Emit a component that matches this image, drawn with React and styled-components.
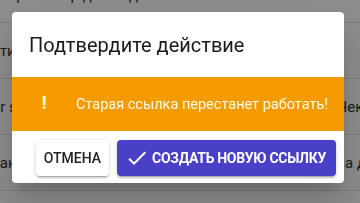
import React from "react";
import styled, { createGlobalStyle } from "styled-components";

const GlobalStyle = createGlobalStyle`
    html, body {
        margin: 0;
        padding: 0;
        width: 360px;
        height: 203px;
        overflow: hidden;
        background: #ffffff;
        font-family: Roboto, "Noto Sans", sans-serif;
    }
`;

// rows of the page behind the dialog, only edges of them stay visible
const rows = [
    { left: "Термометр для воды и воздуха BSV Bosch - бессонница, россия", leftShift: 0, right: "", rightPad: 0 },
    { left: "Активные ссылки", leftShift: -18, right: "", rightPad: 0 },
    { left: "Partner shop", leftShift: -44, right: "Чек на оплату", rightPad: 157 },
    { left: "Сканер штрих-кода", leftShift: -18, right: "Сумма для оплаты", rightPad: 126 },
];

const Page = styled.main`
    margin-top: -33px;
`;

const Row = styled.div`
    display: grid;
    grid-template-columns: 180px 180px;
    height: 55px;
    align-items: center;
    border-bottom: 1px solid #e0e0e0;
    font-size: 15px;
    color: #333;
    white-space: nowrap;
    overflow: hidden;
`;

const Cell = styled.div`
    overflow: hidden;
    padding-left: ${(p) => p.$pad || 0}px;
    text-indent: ${(p) => p.$shift || 0}px;
`;

const Overlay = styled.div`
    position: fixed;
    inset: 0;
    background: rgba(0, 0, 0, 0.45);
    display: flex;
    align-items: flex-start;
    padding: 12px 16px 0 12px;
`;

const Dialog = styled.section`
    width: 332px;
    background: #fff;
    border-radius: 4px;
    overflow: hidden;
    box-shadow: 0 11px 15px -7px rgba(0, 0, 0, 0.2), 0 24px 38px 3px rgba(0, 0, 0, 0.14);
`;

const Title = styled.h2`
    margin: 0;
    height: 65px;
    display: flex;
    align-items: center;
    padding: 0 17px;
    font-size: 20px;
    font-weight: 400;
    color: #1a1a1a;
`;

const Warning = styled.div`
    height: 54px;
    background: #f59b00;
    display: flex;
    align-items: center;
    color: #fffbe6;
    font-size: 14.5px;
`;

const Mark = styled.span`
    width: 64px;
    text-align: center;
    font-size: 19px;
    font-weight: 700;
    margin-top: -3px;
`;

const Actions = styled.div`
    height: 52px;
    display: flex;
    justify-content: flex-end;
    align-items: flex-start;
    gap: 8px;
    padding: 9px 8px 0 0;
    box-sizing: border-box;
`;

const Button = styled.button`
    height: 36px;
    border: none;
    border-radius: 4px;
    padding: ${(p) => (p.$primary ? "0 10px 0 8px" : "0 8px")};
    display: flex;
    align-items: center;
    gap: 3px;
    font-family: Roboto, sans-serif;
    font-size: 14px;
    font-weight: ${(p) => (p.$primary ? 700 : 500)};
    letter-spacing: ${(p) => (p.$primary ? "-0.3px" : "0")};
    background: ${(p) => (p.$primary ? "#4a40c8" : "#ffffff")};
    color: ${(p) => (p.$primary ? "#ffffff" : "#1f1f1f")};
    box-shadow: 0 3px 1px -2px rgba(0, 0, 0, 0.2), 0 2px 2px 0 rgba(0, 0, 0, 0.14),
        0 1px 5px 0 rgba(0, 0, 0, 0.12);
    cursor: pointer;
`;

const CheckIcon = () => (
    <svg width="24" height="24" viewBox="0 0 24 24" fill="#fff">
        <path d="M9 16.17 4.83 12l-1.42 1.41L9 19 21 7l-1.41-1.41z" />
    </svg>
);

const App = () => {
    return (
        <>
            <GlobalStyle />
            <Page>
                {rows.map((row, i) => (
                    <Row key={i}>
                        <Cell $shift={row.leftShift}>{row.left}</Cell>
                        <Cell $pad={row.rightPad}>{row.right}</Cell>
                    </Row>
                ))}
            </Page>
            <Overlay>
                <Dialog>
                    <Title>Подтвердите действие</Title>
                    <Warning>
                        <Mark>!</Mark>
                        Старая ссылка перестанет работать!
                    </Warning>
                    <Actions>
                        <Button>ОТМЕНА</Button>
                        <Button $primary>
                            <CheckIcon />
                            СОЗДАТЬ НОВУЮ ССЫЛКУ
                        </Button>
                    </Actions>
                </Dialog>
            </Overlay>
        </>
    );
};

export default App;
